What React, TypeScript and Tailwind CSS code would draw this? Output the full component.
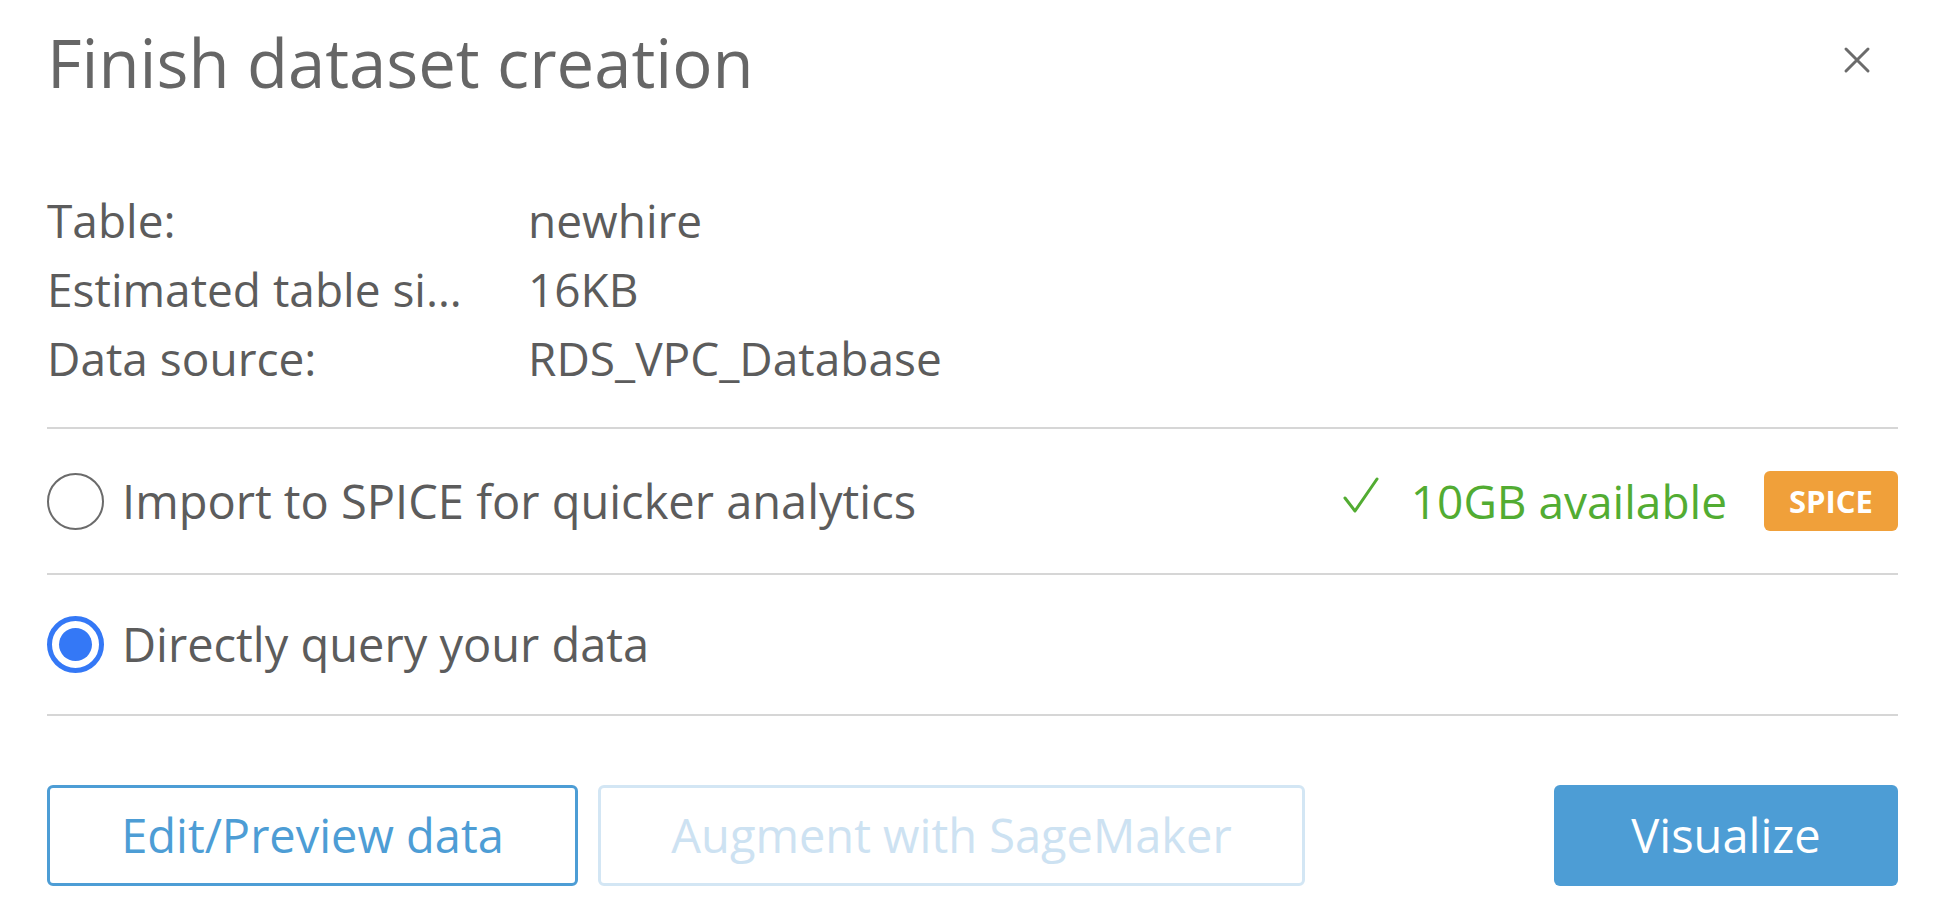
import React, { useState } from "react";

const rows = [
  { label: "Table:", value: "newhire" },
  { label: "Estimated table si…", value: "16KB" },
  { label: "Data source:", value: "RDS_VPC_Database" },
];

function Radio({ checked }: { checked: boolean }) {
  if (checked) {
    return (
      <span className="flex h-[57px] w-[57px] shrink-0 items-center justify-center rounded-full border-[5px] border-[#3478f6] bg-white">
        <span className="h-[33px] w-[33px] rounded-full bg-[#3478f6]" />
      </span>
    );
  }
  return <span className="h-[57px] w-[57px] shrink-0 rounded-full border-2 border-[#6b6b6b] bg-white" />;
}

export default function App() {
  const [mode, setMode] = useState<"spice" | "direct">("direct");

  return (
    <div className="h-[924px] w-[1954px] bg-white pl-[47px] pr-[56px] pt-[22px] font-['Open_Sans',sans-serif] text-[#5c5c5c]">
      {/* Header */}
      <div className="flex items-start justify-between">
        <h1 className="text-[67px] leading-[80px] text-[#666666]">Finish dataset creation</h1>
        <button className="mr-[27px] mt-[24px] text-[#6b6b6b]" aria-label="Close">
          <svg width="28" height="28" viewBox="0 0 28 28" fill="none" stroke="currentColor" strokeWidth="3" strokeLinecap="round">
            <path d="M3 3L25 25M25 3L3 25" />
          </svg>
        </button>
      </div>

      {/* Summary */}
      <div className="mt-[84px] flex flex-col text-[46px] leading-[69px]">
        {rows.map((r) => (
          <div key={r.label} className="flex">
            <span className="w-[481px] shrink-0">{r.label}</span>
            <span>{r.value}</span>
          </div>
        ))}
      </div>

      <div className="mt-[34px] h-[2px] bg-[#d6d6d6]" />

      {/* Options */}
      <label className="flex h-[144px] cursor-pointer items-center" onClick={() => setMode("spice")}>
        <Radio checked={mode === "spice"} />
        <span className="ml-[18px] text-[47px]">Import to SPICE for quicker analytics</span>
        <span className="ml-auto flex items-center text-[46px] text-[#52ac32]">
          <svg width="36" height="36" viewBox="0 0 36 36" fill="none" stroke="currentColor" strokeWidth="3" strokeLinecap="round" strokeLinejoin="round" className="mb-[12px]">
            <path d="M2 21L12 34L34 2" />
          </svg>
          <span className="ml-[32px]">10GB available</span>
        </span>
        <span className="ml-[37px] flex h-[60px] w-[134px] items-center justify-center rounded-[6px] bg-[#f0a03a] text-[31px] font-bold text-white">
          SPICE
        </span>
      </label>

      <div className="h-[2px] bg-[#d6d6d6]" />

      <label className="flex h-[139px] cursor-pointer items-center" onClick={() => setMode("direct")}>
        <Radio checked={mode === "direct"} />
        <span className="ml-[18px] text-[47px]">Directly query your data</span>
      </label>

      <div className="h-[2px] bg-[#d6d6d6]" />

      {/* Actions */}
      <div className="mt-[69px] flex items-center">
        <button className="flex h-[101px] w-[531px] items-center justify-center rounded-[6px] border-[3px] border-[#4d9dd5] text-[47px] font-medium text-[#4d9dd5]">
          Edit/Preview data
        </button>
        <button disabled className="ml-[20px] flex h-[101px] w-[707px] items-center justify-center rounded-[6px] border-[3px] border-[#d3e6f4] text-[47px] font-medium text-[#cde2f2]">
          Augment with SageMaker
        </button>
        <button className="ml-auto flex h-[101px] w-[344px] items-center justify-center rounded-[6px] bg-[#4d9dd5] text-[47px] font-medium text-white">
          Visualize
        </button>
      </div>
    </div>
  );
}
